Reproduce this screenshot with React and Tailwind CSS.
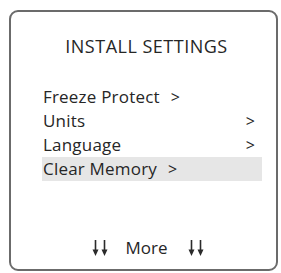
import React from 'react';

const items = [
  { label: 'Freeze Protect', arrow: 'inline' },
  { label: 'Units', arrow: 'right' },
  { label: 'Language', arrow: 'right' },
  { label: 'Clear Memory', arrow: 'inline', active: true },
];

const DoubleDown = () => (
  <svg width="18" height="16" viewBox="0 0 18 16" className="text-[#2b2b2b]">
    <path d="M3.5 0v10M12.5 0v10" stroke="currentColor" strokeWidth="1.6" />
    <path d="M0.5 9.5h6l-3 6.5zM9.5 9.5h6l-3 6.5z" fill="currentColor" />
  </svg>
);

const App = () => {
  return (
    <div className="w-[281px] h-[273px] bg-white pt-[10px] pl-[9px] font-['Open_Sans',sans-serif] text-[#262626]">
      <div className="w-[269px] h-[261px] border-2 border-[#6b6b6b] rounded-[9px] flex flex-col">
        <h1 className="mt-[23px] pl-[6px] text-center text-[18px] leading-[23px] tracking-[0.5px]">INSTALL SETTINGS</h1>

        {/* Menu */}
        <div className="mt-[27px] ml-[31px] w-[220px] flex flex-col">
          {items.map((item) => (
            <div
              key={item.label}
              className={`h-[24px] pl-[1px] flex items-center text-[17px] leading-[24px] tracking-[0.2px] ${item.active ? 'bg-[#e6e6e6]' : ''}`}
            >
              <span>{item.label}</span>
              {item.arrow === 'inline' ? (
                <span className="ml-[11px] text-[16px]">&gt;</span>
              ) : (
                <span className="ml-auto mr-[7px] text-[16px]">&gt;</span>
              )}
            </div>
          ))}
        </div>

        {/* More */}
        <div className="mt-auto mb-[10px] pl-[11px] h-[23px] flex items-center justify-center text-[17px] leading-[23px]">
          <DoubleDown />
          <span className="ml-[15px]">More</span>
          <span className="ml-[20px] flex">
            <DoubleDown />
          </span>
        </div>
      </div>
    </div>
  );
};

export default App;
